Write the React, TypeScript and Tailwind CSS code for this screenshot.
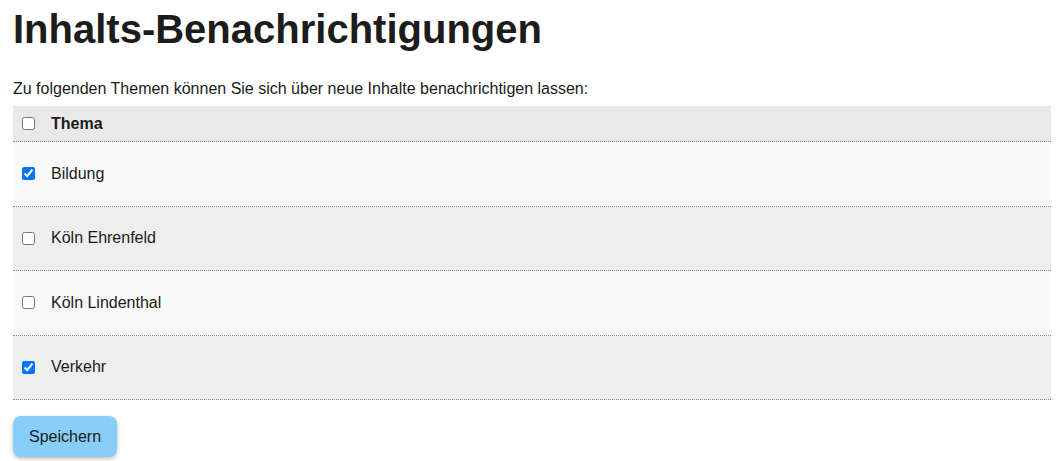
import { useState } from "react";

const THEMEN = [
  { id: "bildung", name: "Bildung", checked: true },
  { id: "ehrenfeld", name: "Köln Ehrenfeld", checked: false },
  { id: "lindenthal", name: "Köln Lindenthal", checked: false },
  { id: "verkehr", name: "Verkehr", checked: true },
];

export default function App() {
  const [sel, setSel] = useState<Record<string, boolean>>(
    Object.fromEntries(THEMEN.map(t => [t.id, t.checked]))
  );
  const all = THEMEN.every(t => sel[t.id]);

  return (
    <div className="min-h-screen bg-white px-[13px] text-[#1a1a1a] [font-family:'Liberation_Sans',Arial,sans-serif]">
      <h1 className="pt-[6px] text-[40px] font-bold leading-[46px] text-[#1c1c1c]">Inhalts-Benachrichtigungen</h1>
      <p className="mt-[28px] text-[16px] leading-[18px]">
        Zu folgenden Themen können Sie sich über neue Inhalte benachrichtigen lassen:
      </p>
      <div className="mt-[8px] w-[1038px]">
        <div className="flex h-[36px] items-center border-b border-dotted border-[#888] bg-[#e9e9e9] text-[16px]">
          <input
            type="checkbox"
            checked={all}
            onChange={() => setSel(Object.fromEntries(THEMEN.map(t => [t.id, !all])))}
            className="ml-[9px] h-[13px] w-[13px]"
          />
          <span className="ml-[16px] font-bold">Thema</span>
        </div>
        {THEMEN.map((t, i) => (
          <div
            key={t.id}
            className={`flex h-[64.5px] items-center border-b border-dotted border-[#888] text-[16px] ${i % 2 === 0 ? "bg-[#f9f9f9]" : "bg-[#eeeeee]"}`}
          >
            <input
              type="checkbox"
              checked={sel[t.id]}
              onChange={() => setSel({ ...sel, [t.id]: !sel[t.id] })}
              className="ml-[9px] h-[13px] w-[13px]"
            />
            <span className="ml-[16px]">{t.name}</span>
          </div>
        ))}
      </div>
      <button className="mt-[16px] rounded-lg bg-[#87cefa] px-[16px] py-[11px] text-[16px] leading-[19px] text-[#1a1a1a] shadow-[0_2px_4px_rgba(0,0,0,0.25)]">
        Speichern
      </button>
    </div>
  );
}
